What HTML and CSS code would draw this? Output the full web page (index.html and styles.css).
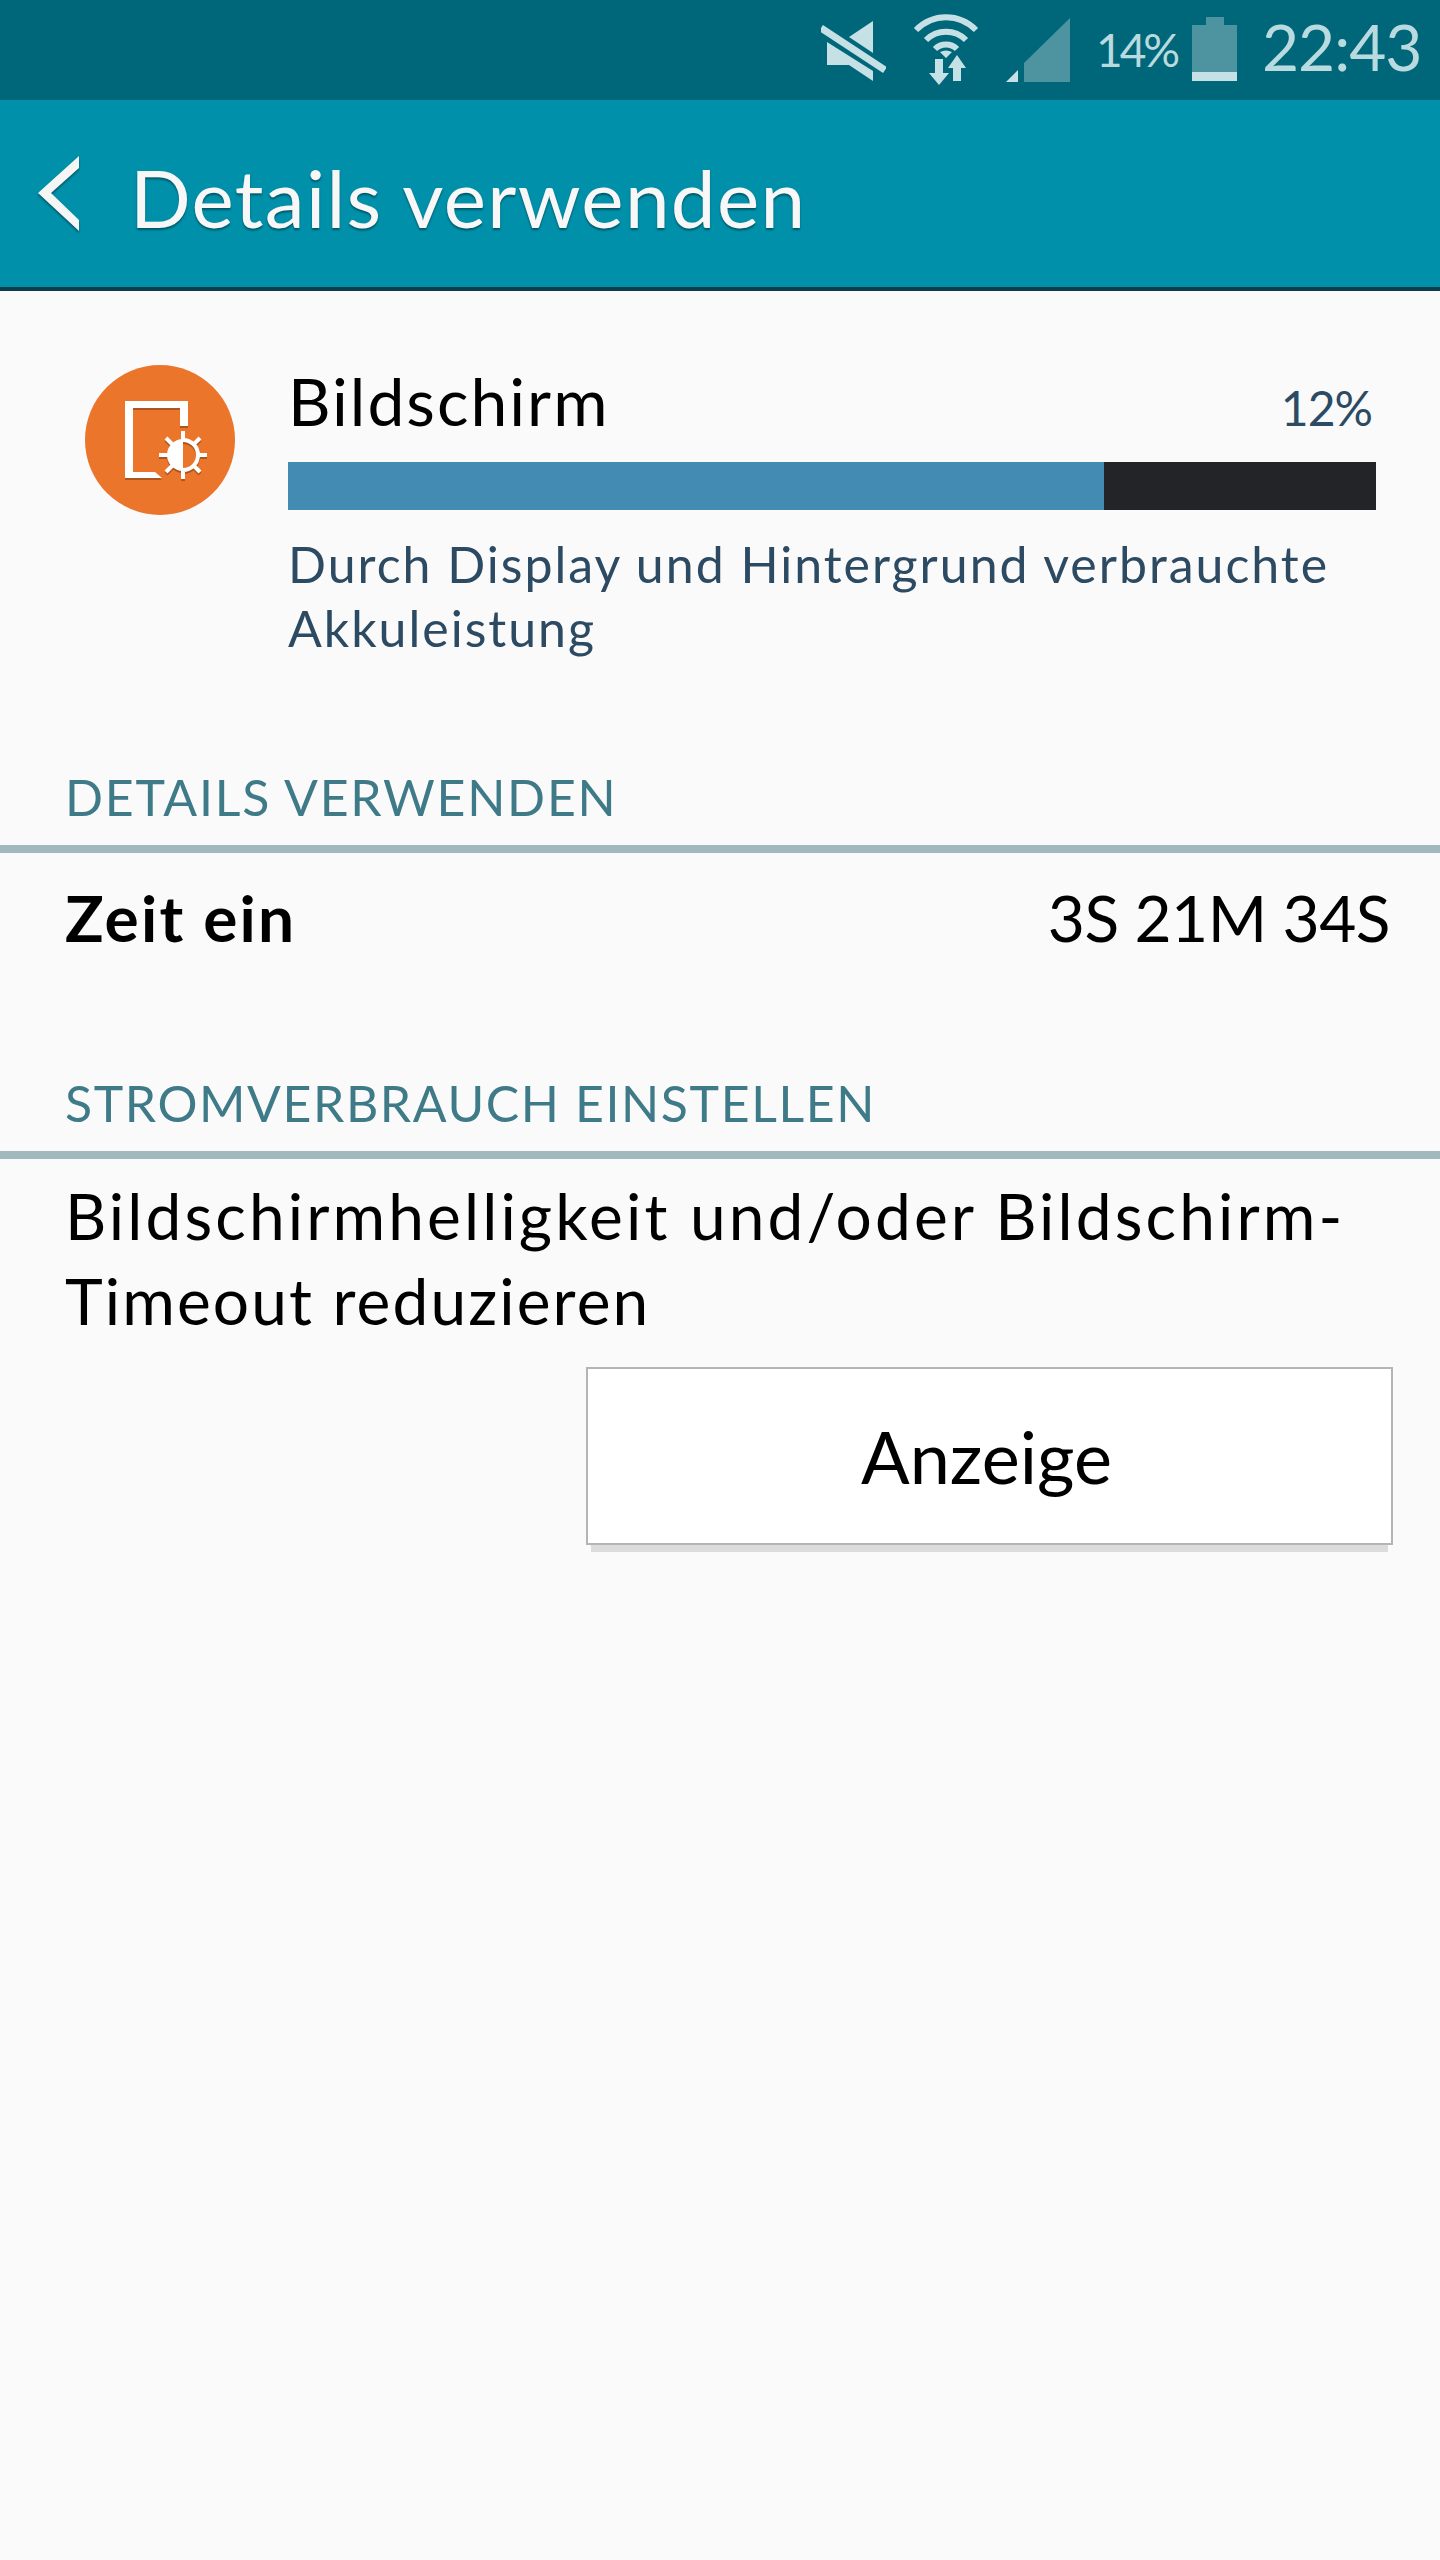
FILE: index.html
```html
<!DOCTYPE html>
<html lang="de">
<head>
<meta charset="utf-8">
<title>Details verwenden</title>
<link rel="stylesheet" href="styles.css">
</head>
<body>
<div class="status">
  <svg class="ic-mute" viewBox="0 0 65 61"><path class="lt" d="M52 1V33L28 17ZM6 22 52 51V61L28 45H6Z"/><path class="cut" d="M0 8 64 50" /></svg>
  <svg class="ic-wifi" viewBox="0 0 66 71"><g class="arc"><path d="M3 16C20 -1 46 -1 63 16"/><path d="M13 26C24 15 42 15 53 26"/><path d="M22 35C28 29 38 29 44 35"/></g><path class="lt" d="M27 38Q33 35 39 38L33 44ZM22 45H30V59H36L26 71 16 59H22ZM44 41 53 54H48V67H40V54H35Z"/></svg>
  <svg class="ic-signal" viewBox="0 0 64 64"><path class="mid" d="M18 45 64 0V64H18Z"/><path class="lt" d="M0 64 12 52V64Z"/></svg>
  <span class="pct">14%</span>
  <svg class="ic-batt" viewBox="0 0 45 64"><path class="mid" d="M14 0H32V8H45V55H0V8H14Z"/><path class="lt" d="M0 55H45V64H0Z"/></svg>
  <span class="clock">22:43</span>
</div>
<header class="action">
  <svg class="back" viewBox="0 0 41 75"><path d="M41 0V12L13 37 41 64V75L0 37Z"/></svg>
  <h1 class="title">Details verwenden</h1>
</header>
<main>
  <section class="summary">
    <svg class="app-icon" viewBox="0 0 150 150">
      <circle class="disc" cx="75" cy="75" r="75"/>
      <g class="glyph">
        <path class="w" d="M40 36H103V61H95V43H48V107H70L77 113H40Z"/>
        <path class="w" d="M98 74A16 16 0 0 0 98 106Z"/>
        <path class="sun" d="M98 75A15 15 0 0 1 98 105M98 66V75M98 105V114M74 90H83M113 90H122M81 73 87 79M115 73 109 79M81 107 87 101M115 107 109 101"/>
      </g>
    </svg>
    <div class="summary-body">
      <div class="name-row"><span class="name">Bildschirm</span><span class="share">12%</span></div>
      <div class="bar"><div class="bar-fill"></div></div>
      <p class="desc">Durch Display und Hintergrund verbrauchte<br>Akkuleistung</p>
    </div>
  </section>
  <h2 class="sec sec-a">DETAILS VERWENDEN</h2>
  <div class="time-row"><span class="time-label">Zeit ein</span><span class="time-val">3S 21M 34S</span></div>
  <h2 class="sec sec-b">STROMVERBRAUCH EINSTELLEN</h2>
  <p class="tip">Bildschirmhelligkeit und/oder Bildschirm-<br><span class="tip-end">Timeout reduzieren</span></p>
  <div class="btn-row"><button class="btn">Anzeige</button></div>
</main>
</body>
</html>
```
FILE: styles.css
```css
* { box-sizing: border-box; }
html, body { margin: 0; padding: 0; }
body { width: 1440px; height: 2560px; background: #fafafa; font-family: Lato, "Open Sans", sans-serif; color: #000; overflow: hidden; }
h1, h2, p { margin: 0; font-weight: 400; }
svg { display: block; flex: none; }

.status { height: 100px; background: #00677a; display: flex; align-items: flex-start; padding-right: 18px; justify-content: flex-end; color: #b9dadf; }
.lt { fill: #c5e1e5; }
.mid { fill: #4e94a0; }
.cut { stroke: #c5e1e5; stroke-width: 7; fill: none; }
.arc { fill: none; stroke: #c5e1e5; stroke-width: 6; }
.ic-mute { width: 65px; height: 61px; margin-top: 20px; margin-right: 27px; }
.ic-wifi { width: 66px; height: 71px; margin-top: 14px; margin-right: 27px; }
.ic-signal { width: 64px; height: 64px; margin-top: 18px; margin-right: 26px; }
.pct { font-size: 46px; line-height: 56px; margin-top: 22px; width: 82px; margin-right: 14px; letter-spacing: -3px; white-space: nowrap; }
.ic-batt { width: 45px; height: 64px; margin-top: 17px; margin-right: 25px; }
.clock { font-size: 64px; line-height: 64px; margin-top: 15px; width: 160px; letter-spacing: -1px; white-space: nowrap; }

.action { height: 191px; background: #0090aa; border-bottom: 4px solid #0b3d4c; display: flex; align-items: center; padding-left: 38px; }
.back { width: 41px; height: 75px; fill: #f5f5f5; filter: drop-shadow(0 2px 1px rgba(0,50,60,.6)); }
.title { margin-left: 51px; padding-top: 7px; font-size: 80px; line-height: 80px; color: #f7f7f7; text-shadow: 0 2px 2px rgba(0,50,60,.6); white-space: nowrap; letter-spacing: 1.3px; }

.summary { display: flex; padding: 74px 64px 0 85px; gap: 53px; }
.app-icon { width: 150px; height: 150px; }
.disc { fill: #ea752b; }
.glyph { filter: drop-shadow(0 2px 0 rgba(120,60,20,.55)); }
.w { fill: #fff; }
.sun { fill: none; stroke: #fff; stroke-width: 4; }
.summary-body { flex: 1; }
.name-row { display: flex; justify-content: space-between; align-items: flex-end; height: 97px; padding-bottom: 26px; }
.name { font-size: 66px; line-height: 70px; letter-spacing: 2px; }
.share { font-size: 48px; line-height: 56px; color: #2d4a63; padding-right: 4px; letter-spacing: -1px; }
.bar { height: 48px; background: #232428; }
.bar-fill { width: 816px; height: 100%; background: #448bb4; }
.desc { margin-top: 22px; font-size: 50px; line-height: 64px; color: #2d4a63; white-space: nowrap; letter-spacing: 2px; }

.sec { font-size: 50px; line-height: 60px; color: #3e7a88; padding: 0 0 18px 65px; border-bottom: 8px solid #a0b9bc; white-space: nowrap; }
.sec-a { margin-top: 107px; letter-spacing: 1.8px; }
.sec-b { margin-top: 70px; letter-spacing: 1.6px; }
.time-row { display: flex; justify-content: space-between; padding: 27px 50px 0 65px; height: 150px; font-size: 64px; line-height: 76px; }
.time-label { font-weight: 700; letter-spacing: 2.2px; }
.time-val { letter-spacing: -.5px; }
.tip { padding: 14px 0 0 65px; font-size: 64px; line-height: 85px; white-space: nowrap; letter-spacing: 3.1px; }
.tip-end { letter-spacing: 2.1px; }
.btn-row { display: flex; justify-content: flex-end; padding: 24px 47px 0 0; }
.btn { width: 807px; height: 178px; background: #fff; border: 2px solid #b4b4b4; border-radius: 0; box-shadow: 0 12px 0 -5px #dcdcdc; font: 400 72px/1 Lato, "Open Sans", sans-serif; color: #000; padding: 0 6px 0 0; }
```
